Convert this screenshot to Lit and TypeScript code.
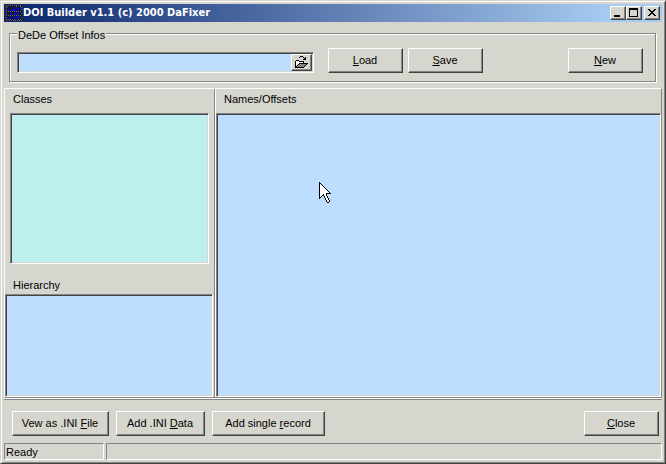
import { LitElement, html, css, svg } from "lit";
import { customElement } from "lit/decorators.js";

// Small pixel glyphs: every character that is in the palette becomes one square.
const pixels = (rows: string[], palette: Record<string, string>) =>
  rows.flatMap((row, y) =>
    [...row].map((c, x) =>
      palette[c] ? svg`<rect x=${x} y=${y} width="1" height="1" fill=${palette[c]}></rect>` : null
    )
  );

const POINTER = [
  "#           ",
  "##          ",
  "#.#         ",
  "#..#        ",
  "#...#       ",
  "#....#      ",
  "#.....#     ",
  "#......#    ",
  "#.......#   ",
  "#........#  ",
  "#.........# ",
  "#......#####",
  "#...#..#    ",
  "#..##..#    ",
  "#.#  #..#   ",
  "##   #..#   ",
  "#     #..#  ",
  "      #..#  ",
  "       #..# ",
  "       #..# ",
  "        ##  ",
];

const FOLDER = [
  "      ###    ",
  "     #   # # ",
  "          ## ",
  "         ### ",
  "  ###        ",
  " #...#####   ",
  " #.......#   ",
  " #...#########",
  " #..#ggggggg# ",
  " #.#ggggggg#  ",
  " ##ggggggg#   ",
  " #########    ",
];

const APP = [
  "g#g#g#g#g#g#g#g#",
  "#g########g###g#",
  "g###b##bb#b#b##g",
  "###b###b#bbbb###",
  "g##b##bb#bb#b#bg",
  "###bbb#bbb##b###",
  "g#g#g#g#g#g#g#g#",
  "####bb##b##bb###",
  "g####b##bb#b###g",
  "####bbb#b#bb####",
  "g#g#g#g#g#g#g#g#",
  "###bb##b##b#bb##",
  "g##b#b#bb#bbb##g",
  "###bbb##bb#b#b##",
  "g#g#g#b#g#b#g#g#",
  "#g#g#g#g#g#g#g#g",
];

@customElement("app-root")
export class AppRoot extends LitElement {
  static styles = css`
    :host {
      display: block;
      --face: #d6d6ce;
      --shade: #848484;
      --dark: #424242;
      --sky: #bddeff;
      font: 11px/13px "Liberation Sans", Arial, sans-serif;
      color: #000;
    }
    * { box-sizing: border-box; }
    svg { display: block; shape-rendering: crispEdges; }
    u { text-underline-offset: 1px; text-decoration-thickness: 1px; text-decoration-skip-ink: none; }
    .window {
      display: flex;
      flex-direction: column;
      min-height: 100vh;
      padding: 3px;
      background: var(--face);
      border: 1px solid;
      border-color: var(--face) var(--dark) var(--dark) var(--face);
      box-shadow: inset 1px 1px #fff, inset -1px -1px var(--shade);
    }
    .title {
      display: flex;
      align-items: center;
      height: 18px;
      padding: 0 2px;
      background: linear-gradient(90deg, #0a246a, #a6caf0 92%);
      color: #fff;
    }
    h1 { flex: 1; margin: 0 0 0 1px; font: bold 11px/14px "DejaVu Sans Condensed", "DejaVu Sans", sans-serif; }
    button {
      flex: none;
      padding: 0 1px 1px 0;
      font: inherit;
      color: inherit;
      background: var(--face);
      border: 1px solid;
      border-color: #fff var(--dark) var(--dark) #fff;
      border-radius: 0;
      box-shadow: inset -1px -1px var(--shade);
    }
    .caption {
      display: flex;
      align-items: center;
      justify-content: center;
      width: 16px;
      height: 14px;
    }
    .shut { margin-left: 2px; }
    .push { width: 75px; height: 25px; }
    .view { width: 97px; }
    .data { width: 89px; }
    .record { width: 113px; }
    .offsets {
      display: flex;
      align-items: flex-start;
      gap: 5px;
      min-width: 0;
      margin: 3px 6px 6px 5px;
      padding: 6px 12px 8px 7px;
      border: 1px solid var(--shade);
      box-shadow: 1px 1px #fff, inset 1px 1px #fff;
    }
    legend { height: 17px; padding: 4px 1px 0; background: var(--face); }
    .sunken {
      background: var(--sky);
      border: 1px solid;
      border-color: var(--shade) #fff #fff var(--shade);
      box-shadow: inset 1px 1px var(--dark), inset -1px -1px var(--face);
    }
    .combo { display: flex; flex: 0 1 297px; height: 21px; margin: 4px 9px 0 0; padding: 1px; }
    .combo input { flex: 1; min-width: 0; border: 0; background: none; font: inherit; outline: 0; }
    .browse { display: flex; align-items: center; justify-content: center; width: 21px; }
    .last { margin-left: auto; }
    .panes {
      display: flex;
      flex: 1;
      border: 1px solid;
      border-color: #fff var(--shade) var(--shade) #fff;
    }
    .side { display: flex; flex: 0 0 209px; flex-direction: column; }
    .main {
      position: relative;
      display: flex;
      flex: 1;
      flex-direction: column;
      border-left: 1px solid var(--shade);
      box-shadow: inset 1px 0 #fff;
      padding-left: 1px;
    }
    label { padding: 4px 8px; height: 24px; }
    select {
      appearance: none;
      display: block;
      width: 100%;
      margin: 0;
      padding: 2px;
      border-radius: 0;
      outline: 0;
      font: inherit;
    }
    .classes { flex: 1; width: auto; min-height: 60px; margin: 0 5px; background: #bdefef; }
    .under { height: 30px; padding-top: 15px; }
    .tree { flex: 0 0 103px; width: 208px; }
    .names { flex: 1; }
    .pointer { position: absolute; left: 104px; top: 93px; }
    .actions {
      display: flex;
      gap: 7px;
      padding: 11px 3px 7px 8px;
      margin-top: 1px;
      border-top: 1px solid var(--shade);
      box-shadow: 0 -1px #fff;
    }
    .status { display: flex; gap: 2px; }
    .cell {
      flex: 1;
      height: 17px;
      padding: 2px 0 0 1px;
      border: 1px solid;
      border-color: var(--shade) #fff #fff var(--shade);
    }
    .first { flex: 0 0 100px; }
  `;

  render() {
    const ink = { "#": "#000", ".": "#fff", g: "#848484" };
    return html`
      <div class="window">
        <header class="title">
          <svg width="16" height="16" aria-hidden="true">
            ${pixels(APP, { "#": "#181818", g: "#6a6a6a", b: "#0808e0" })}
          </svg>
          <h1>DOI Builder v1.1 (c) 2000 DaFixer</h1>
          <button class="caption" aria-label="Minimize">
            <svg width="9" height="9"><rect x="1" y="7" width="6" height="2" /></svg>
          </button>
          <button class="caption" aria-label="Maximize">
            <svg width="9" height="9"><path fill-rule="evenodd" d="M0 0h9v9H0zM1 2v6h7V2z" /></svg>
          </button>
          <button class="caption shut" aria-label="Close window">
            <svg width="8" height="7">
              <path d="M0 0h2v1h1v1h2V1h1V0h2v1H7v1H6v1H5v1h1v1h1v1h1v1H6V6H5V5H3v1H2v1H0V6h1V5h1V4h1V3H2V2H1V1H0z" />
            </svg>
          </button>
        </header>

        <fieldset class="offsets">
          <legend>DeDe Offset Infos</legend>
          <div class="combo sunken">
            <input type="text" aria-label="Offset info file" />
            <button class="browse" aria-label="Browse">
              <svg width="14" height="12">${pixels(FOLDER, ink)}</svg>
            </button>
          </div>
          <button class="push"><u>L</u>oad</button>
          <button class="push"><u>S</u>ave</button>
          <button class="push last"><u>N</u>ew</button>
        </fieldset>

        <main class="panes">
          <section class="side">
            <label for="classes">Classes</label>
            <select id="classes" class="classes sunken" size="8"></select>
            <label class="under" for="tree">Hierarchy</label>
            <select id="tree" class="tree sunken" size="6"></select>
          </section>
          <section class="main">
            <label for="names">Names/Offsets</label>
            <select id="names" class="names sunken" size="16"></select>
            <svg class="pointer" width="12" height="21" aria-hidden="true">${pixels(POINTER, ink)}</svg>
          </section>
        </main>

        <nav class="actions">
          <button class="push view">Vew as .INI <u>F</u>ile</button>
          <button class="push data">Add .INI <u>D</u>ata</button>
          <button class="push record">Add single <u>r</u>ecord</button>
          <button class="push last"><u>C</u>lose</button>
        </nav>

        <footer class="status">
          <div class="cell first">Ready</div>
          <div class="cell"></div>
        </footer>
      </div>
    `;
  }
}
